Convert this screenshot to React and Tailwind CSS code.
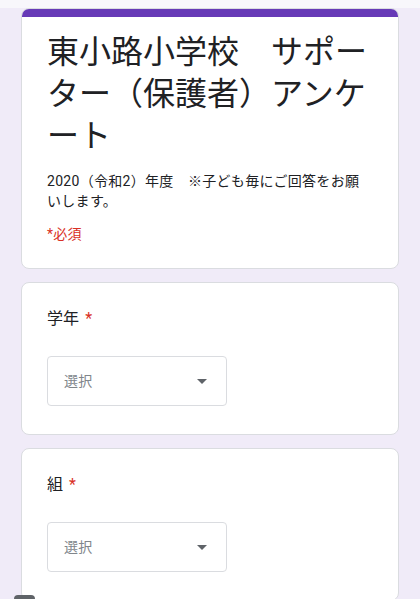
const font = { fontFamily: 'Roboto, "Noto Sans CJK JP", sans-serif' };

function SelectBox() {
  return (
    <div className="flex h-[50px] w-[180px] items-center justify-between rounded border border-[#dadce0] bg-white pl-[16px] pr-[19px]">
      <span className="text-[14px] tracking-[0.2px] text-[#80868b]">選択</span>
      <svg width="10" height="5" viewBox="0 0 10 5">
        <path d="M0 0 L10 0 L5 5 Z" fill="#5f6368" />
      </svg>
    </div>
  );
}

function Question({ label }) {
  return (
    <div className="rounded-lg border border-[#dadce0] bg-white px-[25px] pt-[24px] pb-[28px]">
      <div className="text-[16px] leading-[24px] tracking-[0.1px] text-[#202124]">
        {label}
        <span className="ml-[6px] text-[#d93025]">*</span>
      </div>
      <div className="mt-[25px]">
        <SelectBox />
      </div>
    </div>
  );
}

export default function App() {
  return (
    <div className="min-h-screen bg-[#f0ebf8]" style={font}>
      <div className="h-[8px] bg-[#f8f7fb]" />
      <div className="flex flex-col gap-[13px] px-[21px]">
        <div className="overflow-hidden rounded-lg border border-[#dadce0] bg-white">
          <div className="h-[8px] bg-[#673ab7]" />
          <div className="px-[25px] pt-[14px] pb-[24px]">
            <h1 className="text-[32px] leading-[42px] font-normal text-[#202124]">
              東小路小学校　サポーター（保護者）アンケート
            </h1>
            <p className="mt-[14px] text-[14px] leading-[20px] tracking-[0.3px] text-[#202124]">
              2020（令和2）年度　※子ども毎にご回答をお願いします。
            </p>
            <p className="mt-[13px] text-[14px] leading-[20px] tracking-[0.2px] text-[#d93025]">*必須</p>
          </div>
        </div>
        <Question label="学年" />
        <Question label="組" />
      </div>
      <div className="fixed bottom-0 left-[14px] h-[4px] w-[21px] rounded-t-sm bg-[#5f6368]" />
    </div>
  );
}
